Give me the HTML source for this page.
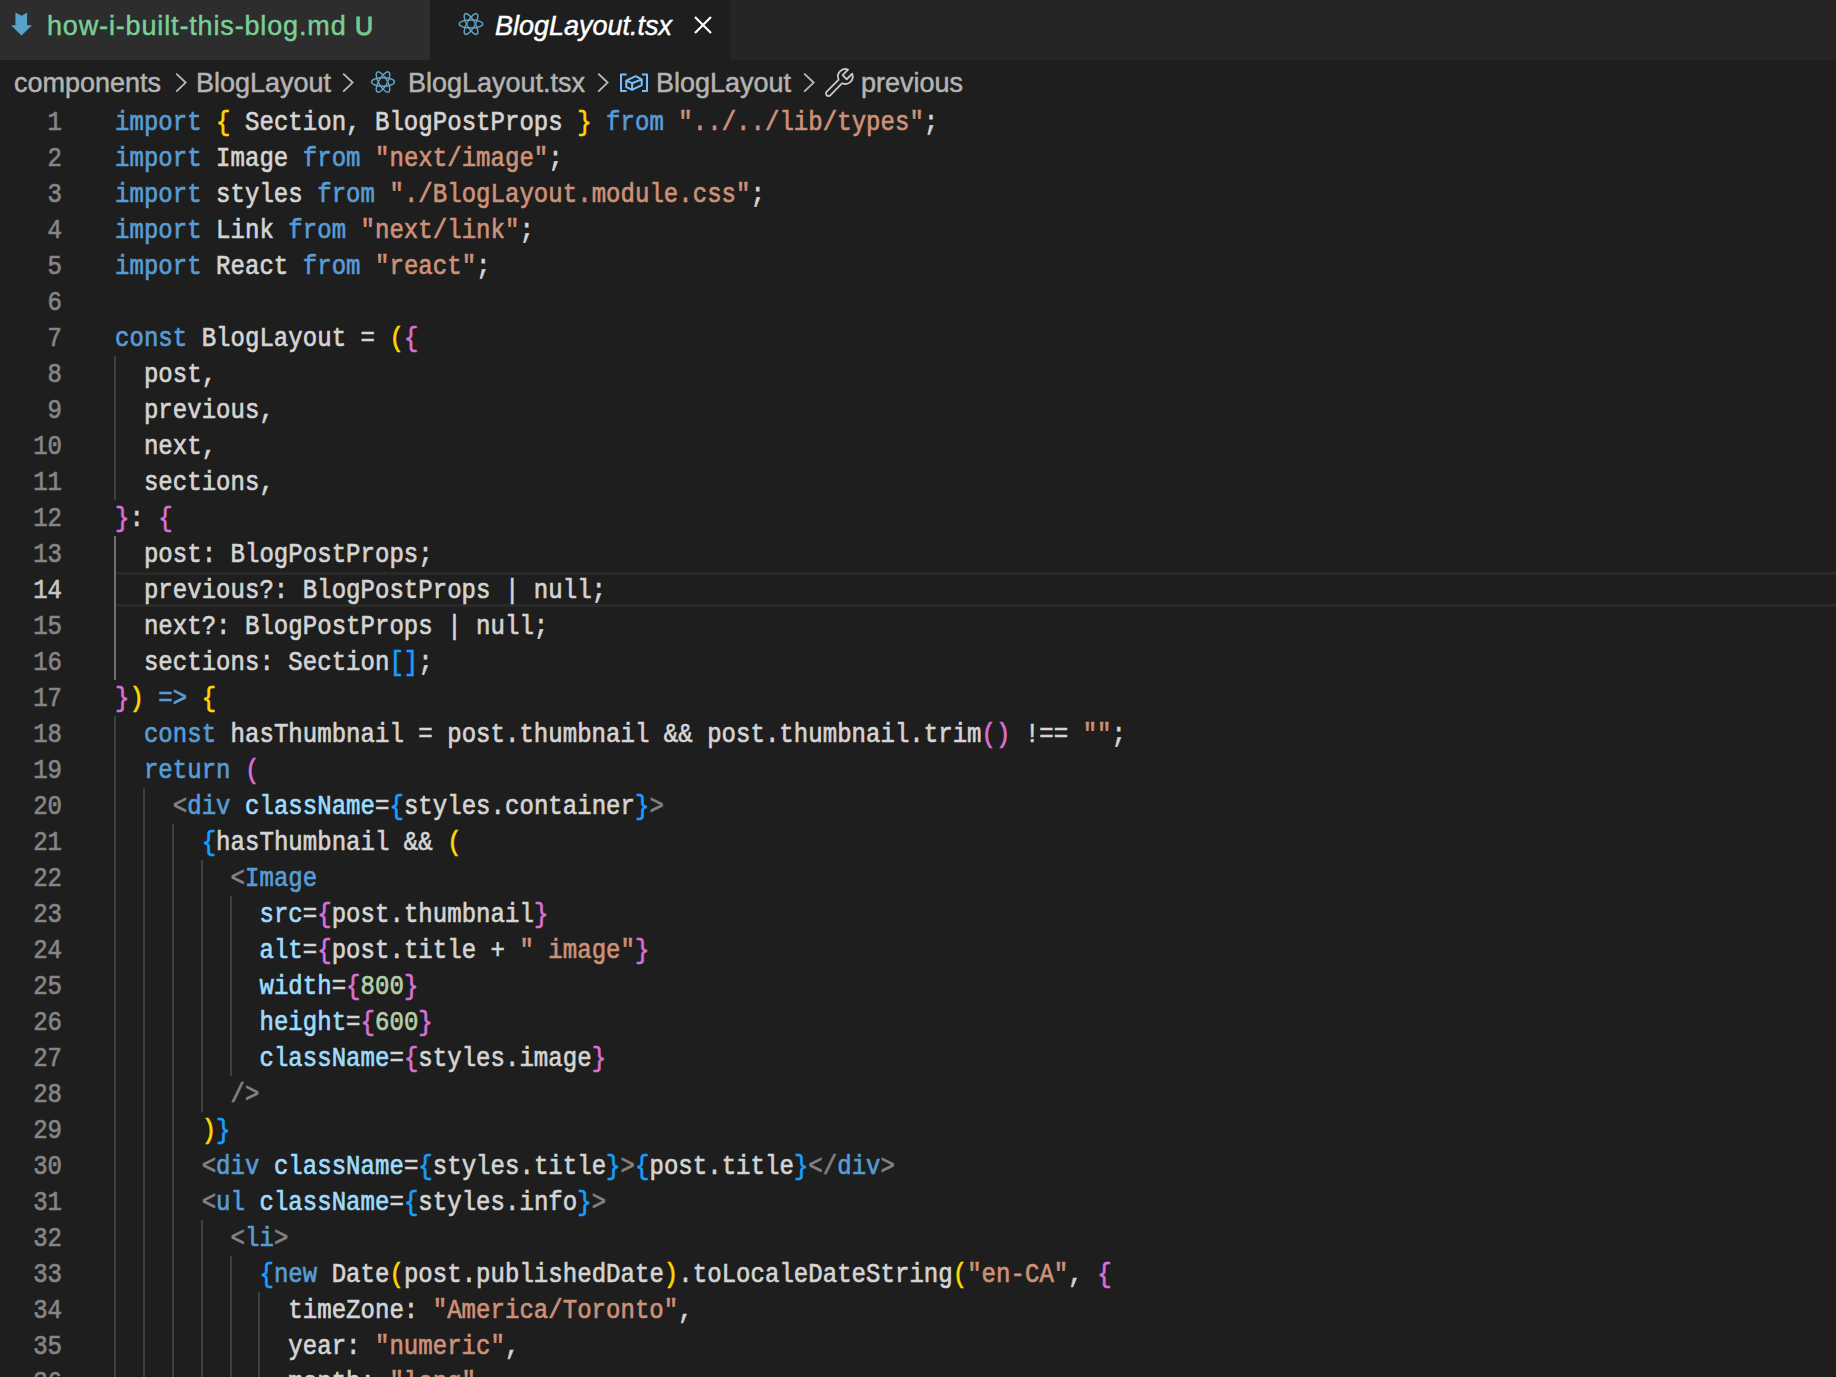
<!DOCTYPE html>
<html>
<head>
<meta charset="utf-8">
<style>
html,body{margin:0;padding:0;}
body{width:1836px;height:1377px;overflow:hidden;background:#1e1e1e;position:relative;font-family:"Liberation Sans",sans-serif;}
.tabs{position:absolute;left:0;top:0;width:1836px;height:60px;background:#252526;}
.tab1{position:absolute;left:0;top:0;width:430px;height:60px;background:#2d2d2d;}
.tab2{position:absolute;left:430px;top:0;width:300px;height:60px;background:#1e1e1e;}
.tt{position:absolute;white-space:pre;font-size:27px;line-height:30px;-webkit-text-stroke:0.45px currentColor;}
.crumbs{position:absolute;left:0;top:60px;width:1836px;height:44px;background:#1e1e1e;}
.ct{position:absolute;top:1px;white-space:pre;font-size:27px;line-height:44px;color:#b4b4b4;-webkit-text-stroke:0.5px currentColor;}
svg{position:absolute;overflow:visible;}
.ln{position:absolute;left:115px;height:36px;line-height:36px;white-space:pre;font-family:"Liberation Mono",monospace;font-size:24px;letter-spacing:0.04px;color:#d4d4d4;transform:scaleY(1.15);transform-origin:0 13.7px;-webkit-text-stroke:0.6px currentColor;}
.num{position:absolute;right:1774px;height:36px;line-height:36px;white-space:pre;font-family:"Liberation Mono",monospace;font-size:24px;color:#858585;text-align:right;transform:scaleY(1.15);transform-origin:0 13.7px;-webkit-text-stroke:0.6px currentColor;}
.num.act{color:#c6c6c6;}
.k{color:#569cd6}.s{color:#ce9178}.n{color:#b5cea8}.a{color:#9cdcfe}.p{color:#808080}
.g{color:#ffd700}.o{color:#da70d6}.b{color:#179fff}
.gd{position:absolute;width:2px;background:#404040;}
.gd.act{background:#707070;}
.cur{position:absolute;left:115px;top:572px;width:1721px;height:29px;border-top:3px solid #292929;border-bottom:3px solid #292929;}
</style>
</head>
<body>
<div class="tabs">
  <div class="tab1">
    <svg style="left:11px;top:12px" width="22" height="24" viewBox="0 0 22 24">
      <path d="M4.4 0.4 L10.6 3.8 L16.1 0.4 L16.1 13.3 L21 13.3 L10.5 23.5 L0 13.3 L4.4 13.3 Z" fill="#56a2c8"/>
    </svg>
    <div class="tt" style="left:47px;top:11px;color:#7acf98;letter-spacing:0.85px">how-i-built-this-blog.md</div>
    <div class="tt" style="left:355px;top:11px;color:#73c991;font-size:25px;-webkit-text-stroke:1px currentColor">U</div>
  </div>
  <div class="tab2">
    <svg style="left:28px;top:13px" width="26" height="22" viewBox="-13 -11 26 22">
      <g fill="none" stroke="#62a3c4" stroke-width="1.4">
        <ellipse rx="11.8" ry="4"/>
        <ellipse rx="11.8" ry="4" transform="rotate(60)"/>
        <ellipse rx="11.8" ry="4" transform="rotate(120)"/>
      </g>
    </svg>
    <div class="tt" style="left:65px;top:11px;color:#ffffff;font-style:italic">BlogLayout.tsx</div>
    <svg style="left:264px;top:16px" width="18" height="18" viewBox="0 0 18 18">
      <path d="M1 1 L17 17 M17 1 L1 17" stroke="#ffffff" stroke-width="2.2"/>
    </svg>
  </div>
</div>
<div class="crumbs">
  <div class="ct" style="left:14px">components</div>
  <svg style="left:175px;top:13px" width="12" height="19" viewBox="0 0 12 19"><path d="M1.2 0.6 L10.6 9.6 L1.2 18.6" fill="none" stroke="#b8b8b8" stroke-width="1.9"/></svg>
  <div class="ct" style="left:196px">BlogLayout</div>
  <svg style="left:342px;top:13px" width="12" height="19" viewBox="0 0 12 19"><path d="M1.2 0.6 L10.6 9.6 L1.2 18.6" fill="none" stroke="#b8b8b8" stroke-width="1.9"/></svg>
  <svg style="left:370px;top:10.5px" width="26" height="22" viewBox="-13 -11 26 22">
    <g fill="none" stroke="#62a3c4" stroke-width="1.4">
      <ellipse rx="11.5" ry="4.2"/>
      <ellipse rx="11.5" ry="4.2" transform="rotate(60)"/>
      <ellipse rx="11.5" ry="4.2" transform="rotate(120)"/>
    </g>
  </svg>
  <div class="ct" style="left:408px">BlogLayout.tsx</div>
  <svg style="left:597px;top:13px" width="12" height="19" viewBox="0 0 12 19"><path d="M1.2 0.6 L10.6 9.6 L1.2 18.6" fill="none" stroke="#b8b8b8" stroke-width="1.9"/></svg>
  <svg style="left:610px;top:2px" width="50" height="40" viewBox="0 0 50 40">
    <g fill="none" stroke="#75beff" stroke-width="2" stroke-linejoin="round">
      <path d="M16.6 12.6 L11 12.6 L11 28.9 L16.6 28.9"/>
      <path d="M32 12.6 L37 12.6 L37 28.9 L32 28.9"/>
      <path d="M16.3 18.6 L25.7 14.2 L31.7 17.4 L31.7 23.2 L22.1 27.9 L16.3 25 Z M16.3 18.6 L22.1 21.2 L31.7 17.4 M22.1 21.2 L22.1 27.9"/>
    </g>
  </svg>
  <div class="ct" style="left:656px">BlogLayout</div>
  <svg style="left:803px;top:13px" width="12" height="19" viewBox="0 0 12 19"><path d="M1.2 0.6 L10.6 9.6 L1.2 18.6" fill="none" stroke="#b8b8b8" stroke-width="1.9"/></svg>
  <svg style="left:824px;top:6px" width="30" height="30" viewBox="0 0 30 30"><path d="M14.66 13.66 A7.4 7.4 0 0 1 24.11 3.64 L18.59 9.16 L22.69 13.26 L28.21 7.74 A7.4 7.4 0 0 1 18.19 17.19 L6.27 29.27 A2.5 2.5 0 0 1 2.73 25.73 Z" fill="none" stroke="#c8c8c8" stroke-width="1.8" stroke-linejoin="round"/></svg>
  <div class="ct" style="left:861px">previous</div>
</div>
<div class="cur"></div>
<div class="gd" style="left:114.0px;top:356px;height:144px"></div>
<div class="gd act" style="left:114.0px;top:536px;height:144px"></div>
<div class="gd" style="left:114.0px;top:716px;height:661px"></div>
<div class="gd" style="left:142.9px;top:788px;height:589px"></div>
<div class="gd" style="left:171.8px;top:824px;height:553px"></div>
<div class="gd" style="left:200.6px;top:860px;height:252px"></div>
<div class="gd" style="left:200.6px;top:1220px;height:157px"></div>
<div class="gd" style="left:229.5px;top:896px;height:180px"></div>
<div class="gd" style="left:229.5px;top:1256px;height:121px"></div>
<div class="gd" style="left:258.4px;top:1292px;height:85px"></div>
<div class="ln" style="top:104px"><span class="k">import</span> <span class="g">{</span> Section, BlogPostProps <span class="g">}</span> <span class="k">from</span> <span class="s">&quot;../../lib/types&quot;</span>;</div>
<div class="num" style="top:104px">1</div>
<div class="ln" style="top:140px"><span class="k">import</span> Image <span class="k">from</span> <span class="s">&quot;next/image&quot;</span>;</div>
<div class="num" style="top:140px">2</div>
<div class="ln" style="top:176px"><span class="k">import</span> styles <span class="k">from</span> <span class="s">&quot;./BlogLayout.module.css&quot;</span>;</div>
<div class="num" style="top:176px">3</div>
<div class="ln" style="top:212px"><span class="k">import</span> Link <span class="k">from</span> <span class="s">&quot;next/link&quot;</span>;</div>
<div class="num" style="top:212px">4</div>
<div class="ln" style="top:248px"><span class="k">import</span> React <span class="k">from</span> <span class="s">&quot;react&quot;</span>;</div>
<div class="num" style="top:248px">5</div>
<div class="ln" style="top:284px"></div>
<div class="num" style="top:284px">6</div>
<div class="ln" style="top:320px"><span class="k">const</span> BlogLayout = <span class="g">(</span><span class="o">{</span></div>
<div class="num" style="top:320px">7</div>
<div class="ln" style="top:356px">  post,</div>
<div class="num" style="top:356px">8</div>
<div class="ln" style="top:392px">  previous,</div>
<div class="num" style="top:392px">9</div>
<div class="ln" style="top:428px">  next,</div>
<div class="num" style="top:428px">10</div>
<div class="ln" style="top:464px">  sections,</div>
<div class="num" style="top:464px">11</div>
<div class="ln" style="top:500px"><span class="o">}</span>: <span class="o">{</span></div>
<div class="num" style="top:500px">12</div>
<div class="ln" style="top:536px">  post: BlogPostProps;</div>
<div class="num" style="top:536px">13</div>
<div class="ln" style="top:572px">  previous?: BlogPostProps | null;</div>
<div class="num act" style="top:572px">14</div>
<div class="ln" style="top:608px">  next?: BlogPostProps | null;</div>
<div class="num" style="top:608px">15</div>
<div class="ln" style="top:644px">  sections: Section<span class="b">[]</span>;</div>
<div class="num" style="top:644px">16</div>
<div class="ln" style="top:680px"><span class="o">}</span><span class="g">)</span> <span class="k">=&gt;</span> <span class="g">{</span></div>
<div class="num" style="top:680px">17</div>
<div class="ln" style="top:716px">  <span class="k">const</span> hasThumbnail = post.thumbnail &amp;&amp; post.thumbnail.trim<span class="o">()</span> !== <span class="s">&quot;&quot;</span>;</div>
<div class="num" style="top:716px">18</div>
<div class="ln" style="top:752px">  <span class="k">return</span> <span class="o">(</span></div>
<div class="num" style="top:752px">19</div>
<div class="ln" style="top:788px">    <span class="p">&lt;</span><span class="k">div</span> <span class="a">className</span>=<span class="b">{</span>styles.container<span class="b">}</span><span class="p">&gt;</span></div>
<div class="num" style="top:788px">20</div>
<div class="ln" style="top:824px">      <span class="b">{</span>hasThumbnail &amp;&amp; <span class="g">(</span></div>
<div class="num" style="top:824px">21</div>
<div class="ln" style="top:860px">        <span class="p">&lt;</span><span class="k">Image</span></div>
<div class="num" style="top:860px">22</div>
<div class="ln" style="top:896px">          <span class="a">src</span>=<span class="o">{</span>post.thumbnail<span class="o">}</span></div>
<div class="num" style="top:896px">23</div>
<div class="ln" style="top:932px">          <span class="a">alt</span>=<span class="o">{</span>post.title + <span class="s">&quot; image&quot;</span><span class="o">}</span></div>
<div class="num" style="top:932px">24</div>
<div class="ln" style="top:968px">          <span class="a">width</span>=<span class="o">{</span><span class="n">800</span><span class="o">}</span></div>
<div class="num" style="top:968px">25</div>
<div class="ln" style="top:1004px">          <span class="a">height</span>=<span class="o">{</span><span class="n">600</span><span class="o">}</span></div>
<div class="num" style="top:1004px">26</div>
<div class="ln" style="top:1040px">          <span class="a">className</span>=<span class="o">{</span>styles.image<span class="o">}</span></div>
<div class="num" style="top:1040px">27</div>
<div class="ln" style="top:1076px">        <span class="p">/&gt;</span></div>
<div class="num" style="top:1076px">28</div>
<div class="ln" style="top:1112px">      <span class="g">)</span><span class="b">}</span></div>
<div class="num" style="top:1112px">29</div>
<div class="ln" style="top:1148px">      <span class="p">&lt;</span><span class="k">div</span> <span class="a">className</span>=<span class="b">{</span>styles.title<span class="b">}</span><span class="p">&gt;</span><span class="b">{</span>post.title<span class="b">}</span><span class="p">&lt;/</span><span class="k">div</span><span class="p">&gt;</span></div>
<div class="num" style="top:1148px">30</div>
<div class="ln" style="top:1184px">      <span class="p">&lt;</span><span class="k">ul</span> <span class="a">className</span>=<span class="b">{</span>styles.info<span class="b">}</span><span class="p">&gt;</span></div>
<div class="num" style="top:1184px">31</div>
<div class="ln" style="top:1220px">        <span class="p">&lt;</span><span class="k">li</span><span class="p">&gt;</span></div>
<div class="num" style="top:1220px">32</div>
<div class="ln" style="top:1256px">          <span class="b">{</span><span class="k">new</span> Date<span class="g">(</span>post.publishedDate<span class="g">)</span>.toLocaleDateString<span class="g">(</span><span class="s">&quot;en-CA&quot;</span>, <span class="o">{</span></div>
<div class="num" style="top:1256px">33</div>
<div class="ln" style="top:1292px">            timeZone: <span class="s">&quot;America/Toronto&quot;</span>,</div>
<div class="num" style="top:1292px">34</div>
<div class="ln" style="top:1328px">            year: <span class="s">&quot;numeric&quot;</span>,</div>
<div class="num" style="top:1328px">35</div>
<div class="ln" style="top:1364px">            month: <span class="s">&quot;long&quot;</span>,</div>
<div class="num" style="top:1364px">36</div>
</body>
</html>
